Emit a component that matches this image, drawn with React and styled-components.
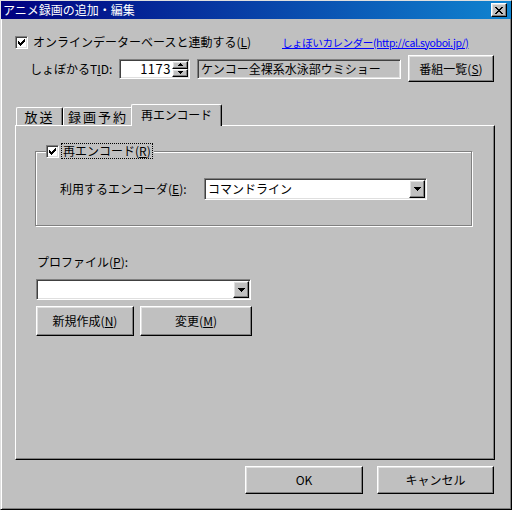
import React from 'react';
import styled, { createGlobalStyle, css } from 'styled-components';

const GlobalStyle = createGlobalStyle`
  html, body {
    margin: 0;
    padding: 0;
    background: #c0c0c0;
  }
  body {
    font-family: "Noto Sans CJK JP", "Noto Sans", sans-serif;
    font-size: 12px;
    color: #000;
  }
  * {
    box-sizing: border-box;
  }
`;

const sunken = css`
  border: 1px solid;
  border-color: #808080 #fff #fff #808080;
  box-shadow: inset 1px 1px 0 #404040, inset -1px -1px 0 #dfdfdf;
`;

const raised = css`
  border: 1px solid;
  border-color: #fff #000 #000 #fff;
  box-shadow: inset -1px -1px 0 #808080, inset 1px 1px 0 #dfdfdf;
`;

const Window = styled.div`
  width: 512px;
  height: 510px;
  background: #c0c0c0;
  border: 1px solid;
  border-color: #dfdfdf #000 #000 #dfdfdf;
  box-shadow: inset 1px 1px 0 #fff, inset -1px -1px 0 #808080;
  display: flex;
  flex-direction: column;
`;

const TitleBar = styled.div`
  height: 18px;
  display: flex;
  align-items: center;
  padding: 0 4px 0 2px;
  background: linear-gradient(to right, #000080, #1084d0);
  color: #fff;
  font-size: 12px;
  line-height: 18px;
`;

const CloseButton = styled.div`
  ${raised};
  margin-left: auto;
  width: 16px;
  height: 14px;
  background: #c0c0c0;
  display: flex;
  align-items: center;
  justify-content: center;
`;

const Row = styled.div`
  display: flex;
  align-items: center;
  height: ${p => p.$h}px;
  margin-top: ${p => p.$mt}px;
  padding-left: ${p => p.$pl || 0}px;
`;

const CheckLabel = styled.label`
  display: flex;
  align-items: center;
  gap: 5px;
  width: ${p => p.$w}px;
  line-height: 14px;
  white-space: nowrap;
`;

const CheckBox = styled.span`
  ${sunken};
  width: 13px;
  height: 13px;
  background: #fff;
  display: inline-flex;
  align-items: center;
  justify-content: center;
  flex: none;
`;

const Link = styled.a`
  color: #0000ff;
  text-decoration: underline;
  font-size: 10.5px;
  letter-spacing: -0.4px;
  white-space: nowrap;
`;

const FieldLabel = styled.span`
  width: ${p => p.$w}px;
  line-height: 14px;
  white-space: nowrap;
  flex: none;
`;

const Spinner = styled.div`
  ${sunken};
  width: 71px;
  height: 20px;
  padding: 1px;
  background: #fff;
  display: flex;
`;

const SpinValue = styled.span`
  flex: 1;
  text-align: right;
  padding-right: 1px;
  font-size: 13px;
  line-height: 16px;
  letter-spacing: 0.5px;
`;

const SpinButtons = styled.div`
  width: 16px;
  display: flex;
  flex-direction: column;
`;

const SpinHalf = styled.div`
  ${raised};
  flex: 1;
  background: #c0c0c0;
  display: flex;
  align-items: center;
  justify-content: center;
`;

const ReadOnlyField = styled.div`
  ${sunken};
  width: 204px;
  height: 20px;
  margin-left: 7px;
  padding: 0 3px;
  background: #c0c0c0;
  line-height: 18px;
  white-space: nowrap;
  overflow: hidden;
`;

const Button = styled.div`
  ${raised};
  width: ${p => p.$w}px;
  height: ${p => p.$h}px;
  margin-left: ${p => p.$ml || 0}px;
  background: #c0c0c0;
  display: flex;
  align-items: center;
  justify-content: center;
  line-height: 14px;
  white-space: nowrap;
  flex: none;
`;

const TabArea = styled.div`
  margin-top: 22px;
  padding-left: 14px;
`;

const TabStrip = styled.div`
  height: 21px;
  padding-left: 1px;
  display: flex;
  align-items: flex-end;
`;

const Tab = styled.div`
  position: relative;
  width: ${p => (p.$active ? p.$w + 4 : p.$w)}px;
  height: ${p => (p.$active ? 22 : 18)}px;
  margin: ${p => (p.$active ? '0 -2px -1px' : '0')};
  z-index: ${p => (p.$active ? 1 : 0)};
  background: #c0c0c0;
  border-top: 1px solid #fff;
  border-left: 1px solid #fff;
  border-right: 1px solid #000;
  border-radius: 2px 2px 0 0;
  box-shadow: inset -1px 0 0 #808080;
  display: flex;
  justify-content: center;
  padding-top: ${p => (p.$active ? 2 : 1)}px;
  font-size: ${p => p.$fs || 13}px;
  line-height: 15px;
  letter-spacing: ${p => p.$ls || 0}px;
  white-space: nowrap;
`;

const Panel = styled.div`
  width: 480px;
  height: 335px;
  border: 1px solid;
  border-color: #fff #000 #000 #fff;
  box-shadow: inset -1px -1px 0 #808080;
  padding: 25px 0 0 19px;
`;

const Group = styled.div`
  position: relative;
  width: 437px;
  height: 75px;
  border: 1px solid #808080;
  box-shadow: inset 1px 1px 0 #fff, 1px 1px 0 #fff;
  padding: 26px 0 0 24px;
`;

const Legend = styled.div`
  position: absolute;
  top: -8px;
  left: 10px;
  display: flex;
  align-items: center;
  gap: 3px;
  padding-right: 2px;
  background: #c0c0c0;
`;

const FocusText = styled.span`
  outline: 1px dotted #000;
  padding: 0 1px;
  line-height: 14px;
  white-space: nowrap;
`;

const Combo = styled.div`
  ${sunken};
  width: ${p => p.$w}px;
  height: ${p => p.$h}px;
  margin-left: ${p => p.$ml || 0}px;
  margin-top: ${p => p.$mt || 0}px;
  padding: 1px;
  background: #fff;
  display: flex;
`;

const ComboText = styled.span`
  flex: 1;
  padding-left: 2px;
  line-height: ${p => p.$lh}px;
  white-space: nowrap;
`;

const DropButton = styled.div`
  ${raised};
  width: 16px;
  background: #c0c0c0;
  display: flex;
  align-items: center;
  justify-content: center;
`;

const PlainLabel = styled.div`
  margin-top: ${p => p.$mt}px;
  margin-left: ${p => p.$ml}px;
  line-height: 14px;
`;

const ButtonRow = styled.div`
  display: flex;
  gap: 6px;
  margin-top: 6px;
  margin-left: 1px;
`;

const Footer = styled.div`
  display: flex;
  justify-content: flex-end;
  gap: 14px;
  margin-top: 6px;
  padding-right: 17px;
`;

const Check = () => (
  <svg width="7" height="7" viewBox="0 0 7 7">
    <path d="M0 2h1v1h1v1h1V3h1V2h1V1h1V0h1v3H6v1H5v1H4v1H3v1H2V6H1V5H0z" fill="#000" />
  </svg>
);

const Arrow = () => (
  <svg width="7" height="4" viewBox="0 0 7 4">
    <path d="M0 0h7v1H6v1H5v1H4v1H3V3H2V2H1V1H0z" fill="#000" />
  </svg>
);

const SmallArrow = ({ up }) => (
  <svg width="5" height="3" viewBox="0 0 5 3" style={up ? { transform: 'rotate(180deg)' } : undefined}>
    <path d="M0 0h5v1H4v1H3v1H2V2H1V1H0z" fill="#000" />
  </svg>
);

const CloseGlyph = () => (
  <svg width="8" height="7" viewBox="0 0 8 7">
    <path d="M0 0h2v1h1v1h2V1h1V0h2v1H7v1H6v1H5v1h1v1h1v1h1v1H6V6H5V5H3v1H2v1H0V6h1V5h1V4h1V3H2V2H1V1H0z" fill="#000" />
  </svg>
);

const ComboBox = ({ w, h, ml, mt, children }) => (
  <Combo $w={w} $h={h} $ml={ml} $mt={mt}>
    <ComboText $lh={h - 4}>{children}</ComboText>
    <DropButton>
      <Arrow />
    </DropButton>
  </Combo>
);

export default function App() {
  return (
    <>
      <GlobalStyle />
      <Window>
        <TitleBar>
          アニメ録画の追加・編集
          <CloseButton>
            <CloseGlyph />
          </CloseButton>
        </TitleBar>

        <Row $h={16} $mt={15} $pl={14}>
          <CheckLabel $w={267}>
            <CheckBox><Check /></CheckBox>
            <span>オンラインデーターベースと連動する(<u>L</u>)</span>
          </CheckLabel>
          <Link href="#">しょぼいカレンダー(http://cal.syoboi.jp/)</Link>
        </Row>

        <Row $h={27} $mt={5} $pl={29}>
          <FieldLabel $w={89}>しょぼかるT<u>I</u>D:</FieldLabel>
          <Spinner>
            <SpinValue>1173</SpinValue>
            <SpinButtons>
              <SpinHalf><SmallArrow up /></SpinHalf>
              <SpinHalf><SmallArrow /></SpinHalf>
            </SpinButtons>
          </Spinner>
          <ReadOnlyField>ケンコー全裸系水泳部ウミショー</ReadOnlyField>
          <Button $w={86} $h={27} $ml={7}><span>番組一覧(<u>S</u>)</span></Button>
        </Row>

        <TabArea>
          <TabStrip>
            <Tab $w={47} $ls={2}>放送</Tab>
            <Tab $w={70} $ls={2}>録画予約</Tab>
            <Tab $w={87} $fs={12} $ls={-0.2} $active>再エンコード</Tab>
          </TabStrip>
          <Panel>
            <Group>
              <Legend>
                <CheckBox><Check /></CheckBox>
                <FocusText>再エンコード(<u>R</u>)</FocusText>
              </Legend>
              <Row $h={22} $mt={0}>
                <FieldLabel $w={144}>利用するエンコーダ(<u>E</u>):</FieldLabel>
                <ComboBox w={223} h={22}>コマンドライン</ComboBox>
              </Row>
            </Group>
            <PlainLabel $mt={29} $ml={2}>プロファイル(<u>P</u>):</PlainLabel>
            <ComboBox w={215} h={21} ml={1} mt={10} />
            <ButtonRow>
              <Button $w={98} $h={30}><span>新規作成(<u>N</u>)</span></Button>
              <Button $w={112} $h={30}><span>変更(<u>M</u>)</span></Button>
            </ButtonRow>
          </Panel>
        </TabArea>

        <Footer>
          <Button $w={118} $h={28}>OK</Button>
          <Button $w={117} $h={28}>キャンセル</Button>
        </Footer>
      </Window>
    </>
  );
}
